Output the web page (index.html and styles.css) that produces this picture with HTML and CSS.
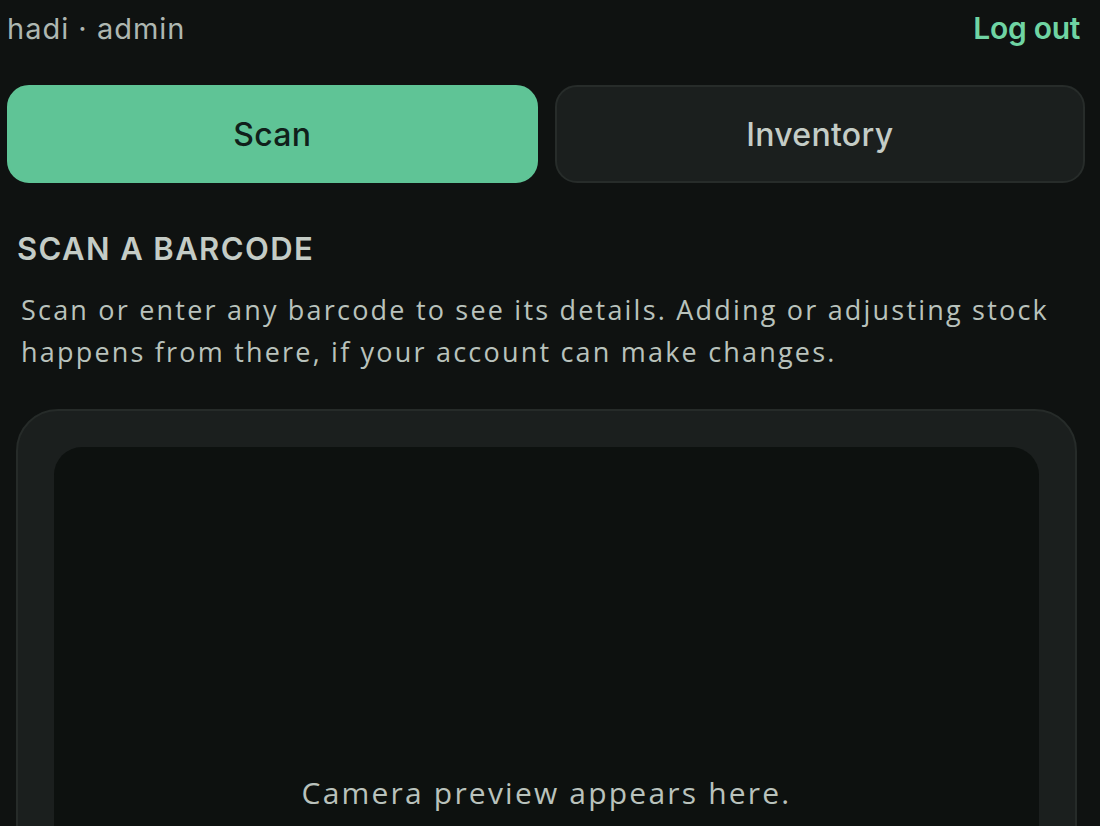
FILE: index.html
```html
<!DOCTYPE html>
<html lang="en">
<head>
<meta charset="utf-8">
<title>Scan</title>
<link rel="stylesheet" href="styles.css">
</head>
<body>
<div class="page">
  <header class="topbar">
    <span class="who">hadi · admin</span>
    <a class="logout" href="#">Log out</a>
  </header>
  <nav class="tabs">
    <button class="tab tab-active">Scan</button>
    <button class="tab">Inventory</button>
  </nav>
  <section class="scan">
    <h2 class="title">SCAN A BARCODE</h2>
    <p class="lead">Scan or enter any barcode to see its details. Adding or adjusting stock happens from there, if your account can make changes.</p>
    <div class="card">
      <div class="preview">
        <span class="preview-text">Camera preview appears here.</span>
      </div>
    </div>
  </section>
</div>
</body>
</html>
```

FILE: styles.css
```css
html, body {
  margin: 0;
  padding: 0;
  background: #0f1211;
  overflow: hidden;
}
.page {
  padding: 8px 15px 0 7px;
  font-family: "Open Sans", "Liberation Sans", sans-serif;
  color: #b9c2bc;
}
.topbar {
  display: flex;
  justify-content: space-between;
  align-items: center;
  height: 40px;
  padding-right: 5px;
}
.who {
  font-family: "Inter", "Liberation Sans", sans-serif;
  font-size: 29px;
  letter-spacing: 1px;
  color: #aeb7b1;
}
.logout {
  font-family: "Inter", sans-serif;
  font-size: 30px;
  font-weight: 600;
  color: #6fd4a3;
  text-decoration: none;
  letter-spacing: -0.3px;
}
.tabs {
  display: grid;
  grid-template-columns: 1fr 1fr;
  gap: 17px;
  margin-top: 37px;
}
.tab {
  height: 98px;
  border-radius: 22px;
  border: 2px solid #272c2a;
  background: #1b1f1e;
  color: #c4ccc6;
  font-family: "Inter", sans-serif;
  font-size: 32px;
  font-weight: 500;
  letter-spacing: 0.3px;
}
.tab-active {
  background: #5fc496;
  border-color: #5fc496;
  color: #10201a;
}
.scan {
  padding-left: 9px;
}
.title {
  margin: 46px 0 0 1px;
  font-family: "Inter", sans-serif;
  font-size: 31px;
  font-weight: 600;
  letter-spacing: 1.4px;
  color: #c4ccc6;
  line-height: 40px;
}
.lead {
  margin: 20px 0 0 5px;
  font-size: 27px;
  line-height: 42px;
  letter-spacing: 2.2px;
  color: #b9c2bc;
  max-width: 1050px;
}
.card {
  margin-top: 36px;
  margin-right: 8px;
  border: 2px solid #262b29;
  background: #1b1f1e;
  border-radius: 42px;
  padding: 36px;
}
.preview {
  height: 690px;
  border-radius: 28px;
  background: #0d110f;
  display: flex;
  align-items: center;
  justify-content: center;
}
.preview-text {
  font-size: 30px;
  letter-spacing: 2.2px;
  color: #b9c2bc;
}
```
